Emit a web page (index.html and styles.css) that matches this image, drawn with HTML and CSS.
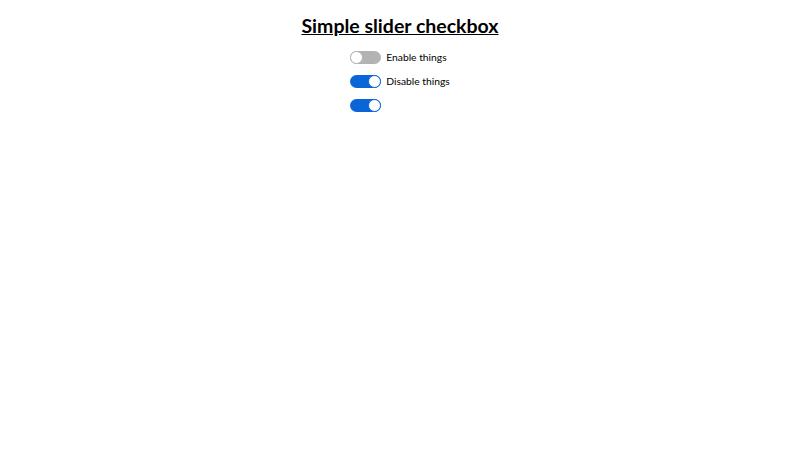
FILE: index.html
```html
<!DOCTYPE html>
<html lang="en">
<head>
  <meta charset="UTF-8">
  <title>Simple slider checkbox</title>
  <link rel="stylesheet" href="styles.css">
</head>
<body>
  <h1 class="title">Simple slider checkbox</h1>
  <div class="list">
    <label class="row">
      <input type="checkbox" class="slider">
      <span>Enable things</span>
    </label>
    <label class="row">
      <input type="checkbox" class="slider" checked>
      <span>Disable things</span>
    </label>
    <label class="row">
      <input type="checkbox" class="slider" checked>
    </label>
  </div>
</body>
</html>
```

FILE: styles.css
```css
body{
  margin: 0;
  font-family: Lato, "Liberation Sans", sans-serif;
  color: #000;
  background: #fff;
}
.title{
  margin: 12px 0 8px;
  text-align: center;
  font-size: 19.5px;
  font-weight: bold;
  text-decoration: underline;
  line-height: 28px;
}
.list{
  width: fit-content;
  margin: 0 auto;
  display: flex;
  flex-direction: column;
  gap: 6px;
}
.row{
  display: flex;
  align-items: center;
  gap: 5px;
  height: 18px;
  font-size: 10.3px;
}
.slider{
  appearance: none;
  -webkit-appearance: none;
  margin: 0;
  position: relative;
  width: 31px;
  height: 13px;
  border-radius: 7px;
  background: #b3b3b3;
  cursor: pointer;
}
.slider::before{
  content: "";
  position: absolute;
  top: 0;
  left: 0;
  width: 11px;
  height: 11px;
  border-radius: 50%;
  background: #fff;
  border: 1px solid #b3b3b3;
}
.slider:checked{
  background: #0a66d6;
}
.slider:checked::before{
  left: 18px;
  border-color: #0a66d6;
}
```
